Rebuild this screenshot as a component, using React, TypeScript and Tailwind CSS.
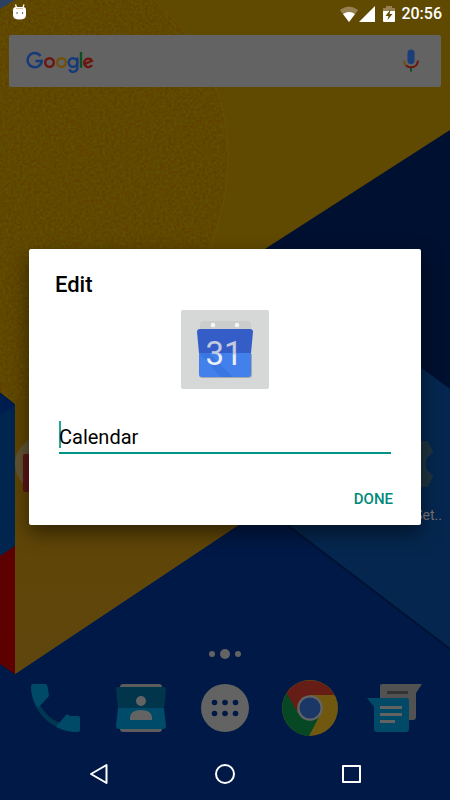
import type { ReactNode } from "react";

function Wallpaper() {
    return (
        <svg className="absolute inset-0 h-full w-full" viewBox="0 0 450 800" preserveAspectRatio="none" aria-hidden="true">
            <defs>
                <filter id="paper" x="0" y="0" width="100%" height="100%" colorInterpolationFilters="sRGB">
                    <feTurbulence type="fractalNoise" baseFrequency="0.35" numOctaves="3" seed="4" />
                    <feColorMatrix values="0 0 0 0 0.38  0.22 0 0 0 0.175  0 0 0 0 0  0 0 0 0 0.6" />
                    <feComposite in2="SourceGraphic" operator="in" />
                </filter>
                <linearGradient id="fold" x1="0" y1="0" x2="0" y2="1">
                    <stop offset="0" stopColor="#604500" />
                    <stop offset="1" stopColor="#5f460d" />
                </linearGradient>
            </defs>
            <rect width="450" height="800" fill="#001947" />
            <path d="M262 248L450 130V395L280 525Z" fill="#001030" />
            <path d="M0 0H450V130L240 265V524L15 674V404L0 392Z" fill="#604900" />
            <path d="M15 380H240V524L15 674Z" fill="url(#fold)" />
            <path d="M0 0H154C200 40 228 95 228 155C228 260 150 350 28 397L15 404L0 392Z" fill="#604600" />
            <path d="M0 0H154C200 40 228 95 228 155C228 260 150 350 28 397L15 404L0 392Z" fill="#604600" filter="url(#paper)" />
            <path d="M154 0C200 40 228 95 228 155C228 190 221 218 210 248" fill="none" stroke="#665200" />
            <path d="M0 0H15L0 9Z" fill="#2c4160" />
            <path d="M0 394L15 405L0 415Z" fill="#001d4f" />
            <path d="M0 415L15 405V546L0 556Z" fill="#00264f" />
            <path d="M0 556L15 546V674L0 664Z" fill="#5d0000" />
            <path d="M420 367L450 389V649L286 524Z" fill="#05274f" />
            <path d="M286 524L450 649" stroke="#001333" strokeWidth="2" />
        </svg>
    );
}

function StatusBar() {
    return (
        <header className="flex h-7 items-center justify-between pr-2 pl-3 text-white">
            <svg className="mb-1 h-4 w-4" viewBox="0 0 16 16" aria-hidden="true">
                <path d="M1 6Q1 3 4 3H11Q14 3 14 6V11Q14 15.500 7.500 15.500Q1 15.500 1 11Z" fill="#fff" />
                <path d="M4.500 3.500L3.500 .5M11 3.500L12 .5" stroke="#fff" strokeWidth="1.300" />
                <path d="M4 4.500H11" stroke="#d9c39b" />
                <circle cx="5" cy="9" r=".7" fill="#222" />
                <circle cx="10.500" cy="9" r=".7" fill="#222" />
            </svg>
            <div className="flex items-center">
                <svg className="h-4 w-5" viewBox="0 0 20 16" aria-hidden="true">
                    <path d="M10 16L.8 4Q10 -3 19.200 4Z" fill="#948051" />
                    <path d="M10 16L4 8Q10 4 16 8Z" fill="#fff" />
                </svg>
                <svg className="mr-0.5 h-4 w-4" viewBox="0 0 16 16" aria-hidden="true">
                    <path d="M0 16L16 0V16Z" fill="#fff" />
                </svg>
                <svg className="ml-1.5 h-4 w-3" viewBox="0 0 12 16" aria-hidden="true">
                    <path d="M0 5V2H3V0H9V2H12V5Z" fill="#948051" />
                    <path d="M0 5H12V15Q12 16 11 16H1Q0 16 0 15Z" fill="#fff" />
                    <path d="M7.500 3.500L2.500 10H5.500L4.500 14L9.500 8H6.500Z" fill="#604900" />
                </svg>
                <time className="ml-1.5 text-base leading-6 font-medium">20:56</time>
            </div>
        </header>
    );
}

function SearchBar() {
    return (
        <div className="mx-[9px] mt-[7px] flex h-13 items-center justify-between rounded-xs bg-[#636363] pr-4 pl-[17px]">
            <svg className="h-6 w-18" viewBox="0 0 72 24" fill="none" strokeWidth="2.400" role="img" aria-label="Google">
                <path d="M14.500 7A7.100 7.100 0 1 0 15.800 12H9.500" stroke="#153a79" />
                <circle cx="23.500" cy="13.500" r="4.300" stroke="#6c1610" />
                <circle cx="35.500" cy="13.500" r="4.300" stroke="#70510b" />
                <circle cx="47" cy="13.500" r="4.300" stroke="#153a79" />
                <path d="M51.300 8.500V18A4.200 4.200 0 0 1 43.300 20.300" stroke="#153a79" />
                <path d="M55 3V18.700" stroke="#0b4f21" />
                <path d="M59 14.800L66 11.800A4.200 4.200 0 1 0 66 16" stroke="#6c1610" />
            </svg>
            <button type="button" aria-label="Voice search" className="mr-0.5 h-8 w-6">
                <svg viewBox="0 0 24 32" className="h-8 w-6" fill="none">
                    <rect x="8.500" y="4.500" width="7" height="14.500" rx="3.500" fill="#1b3d78" />
                    <path d="M5 15.500Q5 18.500 7 20.500" stroke="#70510b" strokeWidth="2" />
                    <path d="M7 20.500Q9 22.300 12 22.300Q18.500 22.300 19 15.500" stroke="#6c1610" strokeWidth="2" />
                    <path d="M12 23V26.500" stroke="#0b4f21" strokeWidth="2" />
                </svg>
            </button>
        </div>
    );
}

function HomeRow() {
    return (
        <div className="flex items-start justify-between pl-[15px]">
            <svg className="h-14 w-14" viewBox="0 0 56 56" aria-hidden="true">
                <circle cx="28" cy="28" r="28" fill="#625433" />
                <path d="M8 20Q8 18 10 18H40V56H10Q8 56 8 54Z" fill="#5c1515" />
            </svg>
            <div className="flex w-16 flex-col items-end pr-2">
                <svg className="mr-1 h-14 w-12" viewBox="0 0 48 56" aria-hidden="true">
                    <path d="M0 5H35Q37 4 38 6L43 15Q43 17 41 18L37 22Q35 28 37 34L41 38Q43 39 43 41L38 50Q37 52 35 51H0Z" fill="#1e3440" />
                </svg>
                <span className="mt-[13px] text-sm leading-5 text-[#777]">Set..</span>
            </div>
        </div>
    );
}

function DockButton({ label, children }: { label: string; children: ReactNode }) {
    return (
        <button type="button" aria-label={label} className="h-16 w-16">
            <svg viewBox="0 0 64 64" className="h-16 w-16">
                {children}
            </svg>
        </button>
    );
}

function Dock() {
    return (
        <nav className="flex justify-between px-6" aria-label="Favorites">
            <DockButton label="Phone">
                <path d="M7 10A47 46 0 0 0 54 56L36 47Q23 42 16 29Z" fill="#003852" />
                <path d="M9 8H21Q23 8 23.500 10L25 20L14 32Q7 22 7 10Q7 8 9 8Z" fill="#004967" />
                <path d="M35 47L43 38L46 40H54Q56 40 56 42V54Q56 56 54 56Q42 56 32 51Z" fill="#004967" />
            </DockButton>
            <DockButton label="Contacts">
                <rect x="11" y="8" width="42" height="48" rx="3" fill="#5c5c5c" />
                <path d="M8 11H56Q57 12 57 14L55 32H9L7 14Q7 12 8 11Z" fill="#00354c" />
                <path d="M9 32H55L57 50Q57 53 54 53H10Q7 53 7 50Z" fill="#004b69" />
                <circle cx="32" cy="25" r="5" fill="#636363" />
                <path d="M21 44V41Q22 34 32 34Q42 34 43 41V44Z" fill="#636363" />
            </DockButton>
            <DockButton label="All apps">
                <circle cx="32" cy="32" r="24" fill="#636363" />
                {[21.5, 32, 42.5].map((x) => (
                    <g key={x} fill="#001947">
                        <circle cx={x} cy="26.500" r="2.800" />
                        <circle cx={x} cy="37.500" r="2.800" />
                    </g>
                ))}
            </DockButton>
            <DockButton label="Chrome">
                <circle cx="32" cy="32" r="28" fill="#705811" />
                <path d="M8 18A28 28 0 0 1 56.500 19H32L21 38Z" fill="#651d16" />
                <path d="M8.500 17A28 28 0 0 0 31 60L42 39H32L20 37Z" fill="#064824" />
                <circle cx="32" cy="32" r="12.800" fill="#636363" />
                <circle cx="32" cy="32" r="10.500" fill="#1b3766" />
            </DockButton>
            <DockButton label="Messenger">
                <path d="M20 8H60L54 17V41Q54 44 51 44H21Q18 44 18 41V10Q18 8 20 8Z" fill="#525252" />
                <path d="M25 16.500H46" stroke="#333" strokeWidth="3" />
                <path d="M5 22H44Q47 22 47 25V53Q47 56 44 56H15Q12 56 12 53V31Z" fill="#004967" />
                <path d="M18 31.500H40M18 38.500H40M18 45.500H33" stroke="#636363" strokeWidth="3" />
            </DockButton>
        </nav>
    );
}

function NavigationBar() {
    return (
        <nav className="mt-2 flex h-13 items-center justify-around px-9" aria-label="System">
            <button type="button" aria-label="Back">
                <svg className="h-6 w-6" viewBox="0 0 24 24" fill="none" stroke="#fff" strokeWidth="2" strokeLinejoin="round">
                    <path d="M19.500 3V21L4 12Z" />
                </svg>
            </button>
            <button type="button" aria-label="Home">
                <svg className="h-6 w-6" viewBox="0 0 24 24" fill="none" stroke="#fff" strokeWidth="2">
                    <circle cx="12" cy="12" r="9" />
                </svg>
            </button>
            <button type="button" aria-label="Recent apps">
                <svg className="h-6 w-6" viewBox="0 0 24 24" fill="none" stroke="#fff" strokeWidth="2" strokeLinejoin="round">
                    <rect x="4" y="4" width="17" height="16" />
                </svg>
            </button>
        </nav>
    );
}

function CalendarIcon() {
    return (
        <svg className="h-16 w-16" viewBox="0 0 64 64" aria-hidden="true">
            <defs>
                <linearGradient id="digits" x1="0" y1="0" x2="0" y2="1">
                    <stop offset="0.5" stopColor="#c3cbdf" />
                    <stop offset="0.55" stopColor="#eceff5" />
                </linearGradient>
            </defs>
            <rect x="7" y="3" width="51" height="20" rx="4" fill="#cbcccc" />
            <circle cx="20" cy="7" r="2.300" fill="#f4f4f4" />
            <circle cx="44" cy="7" r="2.300" fill="#f4f4f4" />
            <path d="M6 36H59V57Q59 60 55 60H10Q6 60 6 57Z" fill="#a3a8ac" />
            <path d="M7 11H57Q60 11 60 14L58 35H6L4 14Q4 11 7 11Z" fill="#345dc8" />
            <path d="M6 35H58V56Q58 59 55 59H9Q6 59 6 56Z" fill="#4281ec" />
            <path d="M6 35H16L40 59H28Z" fill="#3974db" opacity=".7" />
            <text x="31" y="47" textAnchor="middle" fontSize="33" fontWeight="400" fill="url(#digits)">
                31
            </text>
        </svg>
    );
}

function EditDialog() {
    return (
        <form
            role="dialog"
            aria-labelledby="edit-title"
            className="flex w-full flex-col rounded-xs bg-white px-[26px] shadow-[0_8px_20px_rgba(0,0,0,0.5)]"
        >
            <h1 id="edit-title" className="mt-5 text-[22px] leading-8 font-medium text-black">
                Edit
            </h1>
            <button
                type="button"
                aria-label="Change icon"
                className="mt-[9px] flex h-[79px] w-[88px] items-center justify-center self-center rounded-xs bg-[#d6d8d7]"
            >
                <CalendarIcon />
            </button>
            <div className="mx-1 mt-8 flex h-[33px] items-start border-b-2 border-[#009482]">
                <span className="h-[27px] w-0.5 bg-[#26a69a]" />
                <input
                    type="text"
                    aria-label="Label"
                    defaultValue="Calendar"
                    className="-ml-0.5 h-8 w-full min-w-0 bg-transparent text-xl leading-8 text-black outline-none"
                />
            </div>
            <button type="button" className="mt-[27px] mb-2 h-9 self-end px-0.5 text-[15px] leading-5 font-medium text-[#00897b]">
                DONE
            </button>
        </form>
    );
}

export default function App() {
    return (
        <div className="relative flex min-h-screen flex-col overflow-hidden bg-[#001947] font-[Roboto,sans-serif]">
            <Wallpaper />
            <div className="relative flex flex-1 flex-col">
                <StatusBar />
                <SearchBar />
                <main className="flex flex-1 flex-col justify-end pb-[124px]">
                    <HomeRow />
                </main>
                <div className="mb-[17px] flex items-center justify-center gap-[5px]">
                    <span className="h-1.5 w-1.5 rounded-full bg-[#636363]" />
                    <span className="h-2.5 w-2.5 rounded-full bg-[#636363]" />
                    <span className="h-1.5 w-1.5 rounded-full bg-[#636363]" />
                </div>
                <Dock />
                <NavigationBar />
            </div>
            <div className="absolute inset-0 flex items-center px-[29px] pb-[26px]">
                <EditDialog />
            </div>
        </div>
    );
}
